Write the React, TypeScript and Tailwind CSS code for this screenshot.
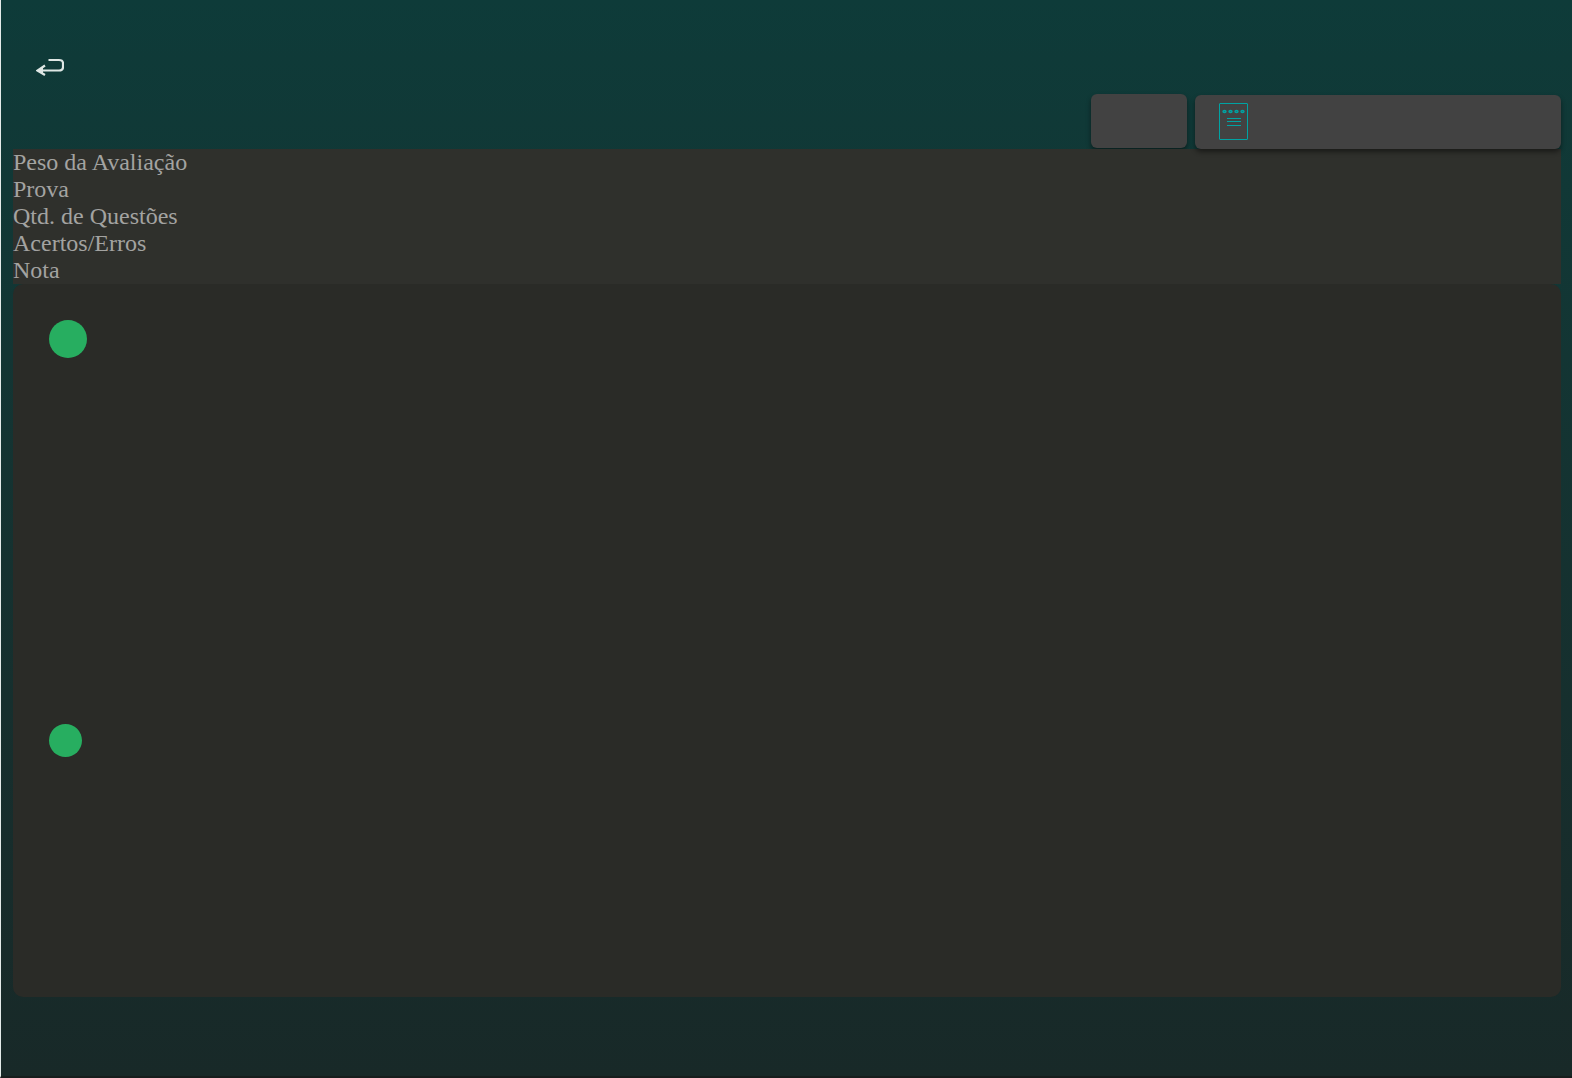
import React from "react";

const columns = [
  "Peso da Avaliação",
  "Prova",
  "Qtd. de Questões",
  "Acertos/Erros",
  "Nota",
];

const BackIcon = () => (
  <svg width="28" height="18" viewBox="0 0 28 18" fill="none" stroke="#dfe7e5">
    <path d="M12.500 2H23Q27 2 27 5.500V9Q27 12.500 23 12.500H3" strokeWidth="2.200" />
    <path d="M9 7.500L1.500 12.500L9 17" strokeWidth="2.200" />
    <path d="M0.500 12.500L7 9V16Z" fill="#dfe7e5" stroke="none" />
  </svg>
);

const NotepadIcon = () => (
  <svg width="30" height="38" viewBox="0 0 30 38" fill="none" stroke="#00a3a3">
    <rect x="0.500" y="0.500" width="28" height="36" rx="0.500" />
    {[5.5, 11.5, 17.5, 23.5].map((cx) => (
      <ellipse key={cx} cx={cx} cy="8.500" rx="1.500" ry="1" strokeWidth="1.400" />
    ))}
    <path d="M8 15.500H22M8 18.500H22M8 22.500H22" />
  </svg>
);

const App = () => {
  return (
    <div className="flex min-h-screen flex-col border-b-2 border-l border-b-[#171e1d] border-l-[#e4ebe9] bg-linear-to-b from-[#0e3b39] to-[#182928] pr-[11px] pb-[79px] pl-3 font-['Liberation_Serif',serif]">
      <header className="flex flex-col pt-[58px]">
        <button type="button" aria-label="Voltar" className="ml-[23px] h-[18px] w-7 self-start">
          <BackIcon />
        </button>
        <div className="flex items-start justify-end gap-2 pt-[18px]">
          <button
            type="button"
            aria-label="Filtrar"
            className="h-[54px] w-24 rounded-md bg-[#424242] shadow-[0_3px_5px_rgba(0,0,0,0.45)]"
          />
          <button
            type="button"
            aria-label="Avaliações"
            className="relative mt-px flex h-[54px] w-[366px] items-center rounded-md bg-[#424242] pl-6 shadow-[0_3px_5px_rgba(0,0,0,0.45)]"
          >
            <NotepadIcon />
          </button>
        </div>
      </header>

      <main className="flex grow flex-col">
        <ul className="bg-[#2f302c] text-2xl leading-[27px] text-[#a3a3a1]">
          {columns.map((label) => (
            <li key={label}>{label}</li>
          ))}
        </ul>
        <section className="flex grow flex-col rounded-[10px] bg-[#2a2b27] pt-9 pl-9">
          <div className="size-[38px] rounded-full bg-[#27ae60]" />
          <div className="mt-[366px] size-[33px] rounded-full bg-[#27ae60]" />
        </section>
      </main>
    </div>
  );
};

export default App;
